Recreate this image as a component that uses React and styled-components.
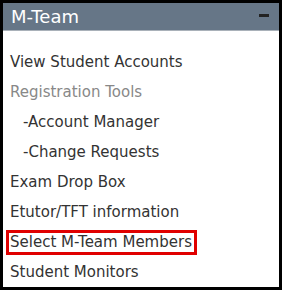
import React from 'react';
import styled, {createGlobalStyle} from "styled-components";

const GlobalStyle = createGlobalStyle`
    html, body {
        margin: 0;
        padding: 0;
        background: #000;
    }
`;

const Panel = styled.div`
    width: 276px;
    height: 284px;
    margin: 3px;
    background: #fff;
    font-family: "DejaVu Sans", Verdana, sans-serif;
    overflow: hidden;
`;

const Header = styled.div`
    height: 27px;
    background: #667687;
    border-bottom: 1px solid #a9b1b9;
    display: flex;
    align-items: center;
    justify-content: space-between;
    padding: 0 10px 0 8px;
`;

const Title = styled.span`
    color: #fff;
    font-size: 18px;
    line-height: 27px;
`;

const Collapse = styled.span`
    width: 10px;
    height: 3px;
    background: #222;
    margin-top: -2px;
`;

const MenuList = styled.ul`
    list-style: none;
    margin: 0;
    padding: 16px 0 0 0;
`;

const MenuItem = styled.li`
    font-size: 15px;
    line-height: 30px;
    height: 30px;
    color: ${props => props.$muted ? "#888" : "#333"};
    padding-left: ${props => props.$indent ? "20px" : "7px"};
`;

const Highlight = styled.span`
    display: inline-block;
    line-height: 19px;
    border: 3px solid #e00000;
    padding: 0 2px 0 1px;
    margin-left: -4px;
`;

const items = [
    {label: "View Student Accounts"},
    {label: "Registration Tools", muted: true},
    {label: "-Account Manager", indent: true},
    {label: "-Change Requests", indent: true},
    {label: "Exam Drop Box"},
    {label: "Etutor/TFT information"},
    {label: "Select M-Team Members", highlight: true},
    {label: "Student Monitors"},
];

function App() {
    return (
        <>
            <GlobalStyle/>
            <Panel>
                <Header>
                    <Title>M-Team</Title>
                    <Collapse/>
                </Header>
                <MenuList>
                    {items.map((item) => (
                        <MenuItem key={item.label} $muted={item.muted} $indent={item.indent}>
                            {item.highlight ? <Highlight>{item.label}</Highlight> : item.label}
                        </MenuItem>
                    ))}
                </MenuList>
            </Panel>
        </>
    );
}

export default App;
